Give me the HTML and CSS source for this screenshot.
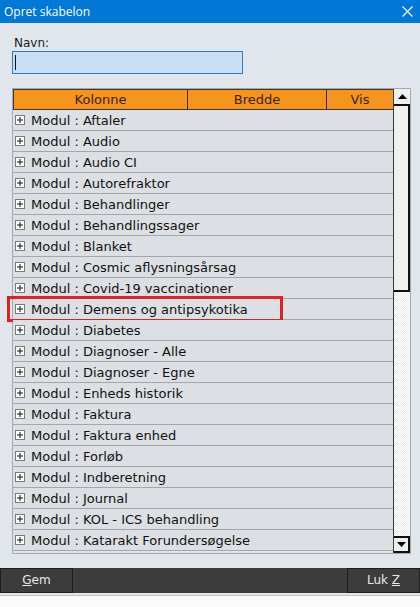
FILE: index.html
```html
<!DOCTYPE html>
<html>
<head>
<meta charset="utf-8">
<link rel="stylesheet" href="styles.css">
</head>
<body>
<div class="window">
  <div class="titlebar">
    <span class="title">Opret skabelon</span>
    <svg class="close" width="11" height="11" viewBox="0 0 11 11"><path d="M0.5 0.5 L10.5 10.5 M10.5 0.5 L0.5 10.5" stroke="#fff" stroke-width="1.1" fill="none"/></svg>
  </div>
  <div class="content">
    <label class="label">Navn:</label>
    <div class="input"><span class="caret"></span></div>
    <div class="grid">
      <div class="table">
        <div class="head">
          <div class="hc c1">Kolonne</div>
          <div class="hc c2">Bredde</div>
          <div class="hc c3">Vis</div>
        </div>
        <div class="rows">
          <div class="row"><span class="plus"></span>Modul : Aftaler</div>
          <div class="row"><span class="plus"></span>Modul : Audio</div>
          <div class="row"><span class="plus"></span>Modul : Audio CI</div>
          <div class="row"><span class="plus"></span>Modul : Autorefraktor</div>
          <div class="row"><span class="plus"></span>Modul : Behandlinger</div>
          <div class="row"><span class="plus"></span>Modul : Behandlingssager</div>
          <div class="row"><span class="plus"></span>Modul : Blanket</div>
          <div class="row"><span class="plus"></span>Modul : Cosmic aflysningsårsag</div>
          <div class="row"><span class="plus"></span>Modul : Covid-19 vaccinationer</div>
          <div class="row hl"><span class="plus"></span>Modul : Demens og antipsykotika<span class="redbox"></span></div>
          <div class="row"><span class="plus"></span>Modul : Diabetes</div>
          <div class="row"><span class="plus"></span>Modul : Diagnoser - Alle</div>
          <div class="row"><span class="plus"></span>Modul : Diagnoser - Egne</div>
          <div class="row"><span class="plus"></span>Modul : Enheds historik</div>
          <div class="row"><span class="plus"></span>Modul : Faktura</div>
          <div class="row"><span class="plus"></span>Modul : Faktura enhed</div>
          <div class="row"><span class="plus"></span>Modul : Forløb</div>
          <div class="row"><span class="plus"></span>Modul : Indberetning</div>
          <div class="row"><span class="plus"></span>Modul : Journal</div>
          <div class="row"><span class="plus"></span>Modul : KOL - ICS behandling</div>
          <div class="row"><span class="plus"></span>Modul : Katarakt Forundersøgelse</div>
        </div>
      </div>
      <div class="scrollbar">
        <div class="sbtn up"><svg width="9" height="5" viewBox="0 0 9 5"><path d="M0 5 L4.5 0 L9 5 Z" fill="#000"/></svg></div>
        <div class="thumb"></div>
        <div class="track"></div>
        <div class="sbtn down"><svg width="9" height="5" viewBox="0 0 9 5"><path d="M0 0 L9 0 L4.5 5 Z" fill="#000"/></svg></div>
      </div>
    </div>
  </div>
  <div class="footer">
    <div class="fbtn"><u>G</u>em</div>
    <div class="fbtn">Luk <u>Z</u></div>
  </div>
  <div class="bottom"></div>
</div>
</body>
</html>
```

FILE: styles.css
```css
* { box-sizing: border-box; }
html, body { margin: 0; padding: 0; }
body {
  width: 420px;
  height: 607px;
  background: #e1e6ec;
  font-family: "DejaVu Sans", Verdana, sans-serif;
  overflow: hidden;
}
.window { display: flex; flex-direction: column; height: 607px; }
.titlebar {
  height: 23px;
  background: #0078d7;
  display: flex;
  align-items: center;
  justify-content: space-between;
  padding: 0 7px 0 4px;
  flex-shrink: 0;
}
.title {
  color: #fff;
  font-family: "Open Sans", "Noto Sans", sans-serif;
  font-size: 12px;
}
.close { display: block; }
.content {
  padding: 13px 9px 0 12px;
  display: flex;
  flex-direction: column;
  flex: 1;
}
.label {
  font-size: 12px;
  color: #1a1a1a;
  padding-left: 2px;
  height: 15px;
  line-height: 15px;
}
.input {
  width: 231px;
  height: 23px;
  background: #c8def5;
  border: 1px solid #2a7dc8;
  padding: 3px 2px;
}
.caret {
  display: block;
  width: 1px;
  height: 15px;
  background: #111;
}
.grid {
  margin-top: 14px;
  display: flex;
  border: 1px solid #a4a8ad;
  height: 466px;
  width: 399px;
}
.table { width: 380px; display: flex; flex-direction: column; }
.head {
  display: flex;
  height: 21px;
  background: #f7941d;
  border: 1px solid #3a3a3a;
  border-right: none;
}
.hc {
  font-size: 13px;
  color: #3a2200;
  text-align: center;
  line-height: 19px;
  border-right: 1px solid #3a2a10;
}
.c1 { width: 174px; }
.c2 { width: 139px; }
.c3 { width: 66px; border-right: none; }
.rows { display: flex; flex-direction: column; }
.row {
  position: relative;
  height: 21px;
  background: #dcdfe3;
  border-bottom: 1px solid #a3a6aa;
  display: flex;
  align-items: center;
  font-size: 13px;
  color: #111;
  padding-left: 2px;
  white-space: nowrap;
}
.plus {
  width: 10px;
  height: 10px;
  border: 1px solid #7a7a7a;
  background: #fff;
  margin-right: 6px;
  position: relative;
  flex-shrink: 0;
}
.plus::before, .plus::after {
  content: "";
  position: absolute;
  background: #111;
}
.plus::before { left: 1px; top: 3px; width: 6px; height: 2px; transform: scaleY(0.5); }
.plus::after { left: 3px; top: 1px; width: 2px; height: 6px; transform: scaleX(0.5); }
.redbox {
  position: absolute;
  left: -6px;
  top: -3px;
  width: 276px;
  height: 26px;
  border: 3px solid #e01f26;
}
.scrollbar {
  width: 17px;
  display: flex;
  flex-direction: column;
  border-left: 1px solid #3a3a3a;
}
.sbtn {
  height: 17px;
  background: #f0f0f0;
  display: flex;
  align-items: center;
  justify-content: center;
}
.sbtn svg { display: block; }
.up { border-bottom: 2px solid #111; }
.thumb {
  height: 186px;
  background: #f0f0f0;
  border-right: 2px solid #111;
  border-bottom: 2px solid #111;
}
.track {
  flex: 1;
  background-color: #fff;
  background-image: repeating-conic-gradient(#ececec 0 25%, #fff 0 50%);
  background-size: 2px 2px;
}
.down { border: 2px solid #111; border-left: none; height: 17px; }
.footer {
  margin-top: 14px;
  height: 25px;
  background: #3c3c3c;
  display: flex;
  justify-content: space-between;
  flex-shrink: 0;
}
.fbtn {
  width: 73px;
  height: 25px;
  border: 1px solid #1c1c1c;
  color: #e8e8e8;
  font-size: 12px;
  line-height: 23px;
  text-align: center;
}
.bottom {
  margin-top: 2px;
  border-top: 1px solid #c4c4c4;
  background: #fafafa;
  flex: 1;
}
```
